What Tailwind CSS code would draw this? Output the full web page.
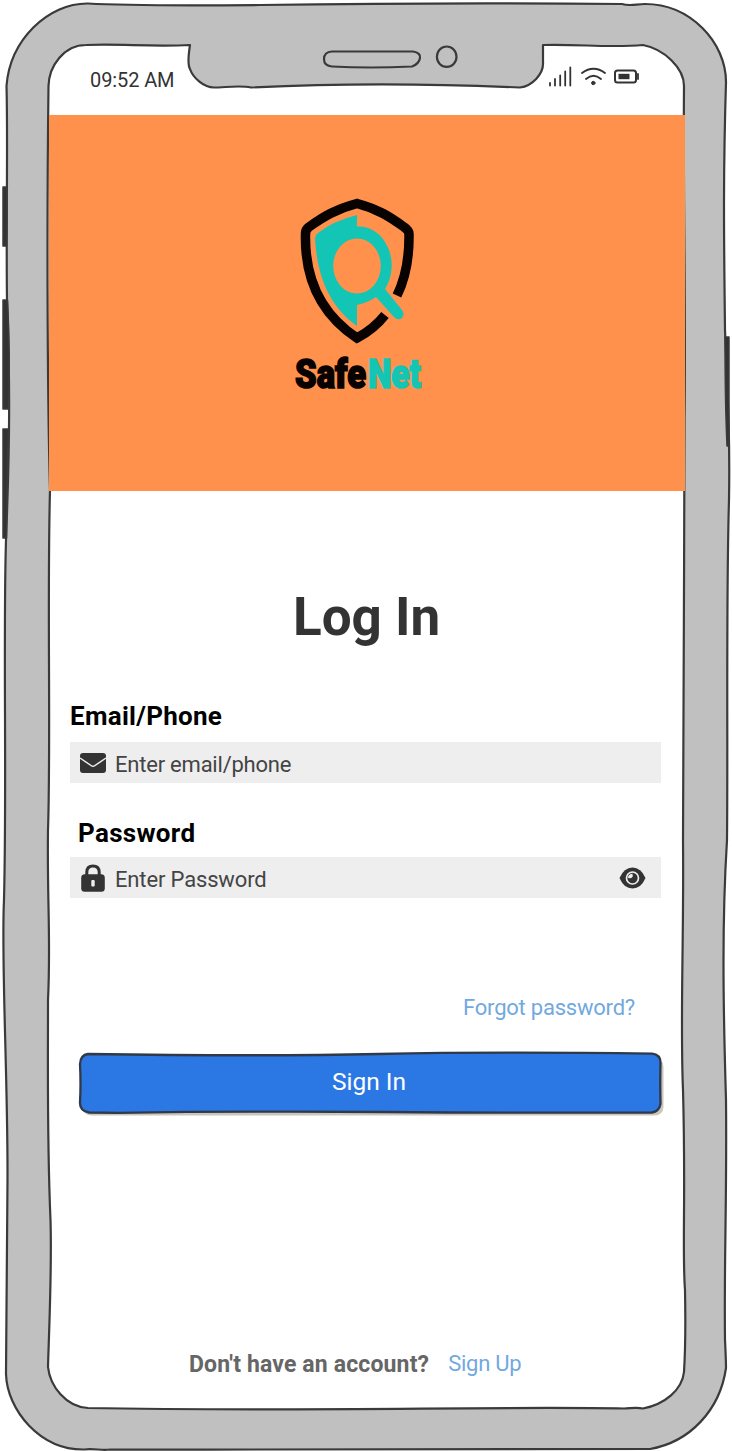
<!DOCTYPE html>
<html lang="en">
<head>
<meta charset="utf-8">
<title>SafeNet Log In</title>
<script src="https://cdn.jsdelivr.net/npm/@tailwindcss/browser@4"></script>
</head>
<body class="bg-white font-['Roboto',sans-serif] text-[#333]">
<div class="relative h-[1451px] w-[732px] overflow-hidden">
  <!-- phone frame -->
  <svg class="absolute inset-0" width="732" height="1451" viewBox="0 0 732 1451" fill="none" stroke="#3a3a3a" stroke-width="2.2" stroke-linejoin="round" stroke-linecap="round">
    <path fill="#c0c0c0" d="M6.500 86C10 40 48 3 88 3.500C130 6 200 5.500 260 5C400 3 520 3 622 4C630 6.500 636 4 645 4C690 4 726 42 726 82C723 180 724 240 725 330C728 400 730 440 729 500C726 600 728 740 727 840C722 920 723 1000 726 1100C727 1200 724 1260 725 1340Q726 1360 726 1368C720 1410 690 1442 650 1449C500 1448 300 1450 110 1449.500C102 1451 94 1448 84 1449.500C40 1450 7 1410 6 1374C6 1300 7 1240 7.500 1180C8 1080 1 960 4 900C7 780 3 640 6 540C10 440 10 380 7 300C6 220 8 140 6.500 86Z"/>
    <g fill="#333" stroke-width="1.500">
      <path d="M3 187H6.500Q7.500 220 6.500 246H3Z"/>
      <path d="M3 300H7.500Q10.500 360 8.500 409H3Z"/>
      <path d="M3 429H8.500Q6.500 490 6.500 538H3Z"/>
      <path d="M725 337H729V446H727Q725 400 725 337Z"/>
    </g>
    <path fill="#fff" d="M48.500 86C49 66 64 45 86 45C120 43.500 150 47 190 45Q187 64 190 69C193 78 204 87.500 214 87.500C225 87.500 240 85 251 87.500C340 83 420 83 520 87.500C532 86 544 74 543 62V45C580 44 610 48 643 45C664 49 684 68 684 86C683 200 686 300 684.500 420C684 560 684 700 683 840C684 940 680 1020 683 1090C686 1200 682 1250 685 1290Q686 1340 684 1372C682 1390 665 1404 643 1408.500C636 1407 630 1408.500 624 1408.500C500 1406 300 1412 88 1408C66 1407 50 1386 48 1367C49 1330 52 1270 50.500 1220C47 1140 48 1080 48 1000C51 940 47 900 48 830C51 740 47 600 50 490C47 380 47 200 48.500 86Z"/>
    <path d="M332 51.500H413Q421 53 420 58Q419 64 412 66.500Q370 68.500 332 66.500Q324 66 324 59Q324 52 332 51.500Z"/>
    <ellipse cx="446.700" cy="56.700" rx="9.800" ry="10.200"/>
  </svg>

  <main class="relative flex h-full flex-col">
    <div class="flex h-[115px] shrink-0 items-start justify-between pt-[65px] pr-[92px] pl-[90px]">
      <span class="mt-[2px] text-[20px] leading-[26px] tracking-[-0.1px]">09:52 AM</span>
      <svg width="92" height="22" viewBox="548 65 92 22" fill="none" stroke="#333" stroke-width="1.800" stroke-linecap="round">
        <path d="M550 83V85.500M555 79V85.500M560.200 75.500V85.500M565.200 71.500V85.500M570.300 67.500V85.500"/>
        <path d="M582 73Q593.500 64.500 605 73M586 79Q593.500 72.500 601 79"/>
        <circle cx="593.300" cy="83" r="1.700" fill="#333" stroke-width="1"/>
        <rect x="615" y="70.500" width="21" height="12" rx="2.500" stroke-width="2"/>
        <path d="M638 74V79"/>
        <path d="M618.500 73.800H629.500V79.200H618.500Z" fill="#333" stroke="none"/>
      </svg>
    </div>

    <header class="mr-[47px] ml-[49px] flex h-[376px] shrink-0 bg-[#ff914d] pt-[80px] pl-[238px]">
      <svg width="160" height="205" viewBox="287 195 160 205">
        <path fill="none" stroke="#080200" stroke-width="9.500" d="M397 295.500Q409.500 270 409 234C409 231 407 229 404 227C390 217 378 209 357 203.500C336 209 323 217 309 227C306 229 305.500 231 305.500 234Q304 303 357 338Q374 329 385 315"/>
        <path fill="#13c5b5" fill-rule="evenodd" d="M357 215V226.500A33 39 0 0 1 385 289L402 310Q405 314 402 318Q398 321 394 317L376 297Q367 303 357 305V326C330 307 317 277 315 238Q315 235 318 233Q333 221 357 215ZM357 238.500A23.800 27.500 0 1 0 357 293.500A23.800 27.500 0 1 0 357 238.500Z"/>
        <g font-family="Roboto, sans-serif" font-size="40" font-weight="900" stroke-width="1.600">
          <text transform="translate(295 388) scale(.845 1)" textLength="84" lengthAdjust="spacingAndGlyphs" fill="#080200" stroke="#080200">Safe</text>
          <text transform="translate(368 388) scale(.8 1)" textLength="66" lengthAdjust="spacingAndGlyphs" fill="#13c5b5" stroke="#13c5b5">Net</text>
        </g>
      </svg>
    </header>

    <h1 class="mt-[96px] self-start pl-[293px] text-[53px] leading-[60px] font-bold">Log In</h1>

    <form class="flex flex-col pr-[71px] pl-[70px]">
      <label class="mt-[53px] text-[26px] leading-[32px] font-bold tracking-[0.28px] text-black">Email/Phone</label>
      <div class="mt-[10px] flex h-[41px] items-center bg-[#eee] pl-[9px]">
        <svg width="28" height="22" viewBox="0 0 28 22"><rect x="1" y="1" width="26" height="20" rx="3" fill="#333"/><path d="M1 6L12 13.500Q14 15 16 13.500L27 6" fill="none" stroke="#eee" stroke-width="1.500"/></svg>
        <span class="mt-[5px] ml-[8px] text-[22px] leading-[28px] tracking-[-0.22px] text-[#444]">Enter email/phone</span>
      </div>
      <label class="mt-[34px] pl-[8px] text-[26px] leading-[32px] font-bold tracking-[0.3px] text-black">Password</label>
      <div class="mt-[8px] flex h-[41px] items-center bg-[#eee] pr-[15px] pl-[11px]">
        <svg width="24" height="28" viewBox="0 0 24 28"><path d="M5.800 12V8Q6 2 12 2T18.200 8V12" fill="none" stroke="#333" stroke-width="3"/><rect x="0.200" y="10.200" width="23.600" height="17.600" rx="3.500" fill="#333"/><rect x="10.300" y="16" width="3.400" height="6.500" rx="1" fill="#eee"/></svg>
        <span class="mt-[5px] ml-[10px] text-[22px] leading-[28px] tracking-[-0.15px] text-[#444]">Enter Password</span>
        <svg class="ml-auto" width="27" height="22" viewBox="0 0 27 22"><path d="M0.500 11Q5 .5 13.500 .5T26.500 11Q22 21.500 13.500 21.500T.5 11Z" fill="#333"/><circle cx="13.500" cy="11" r="6" fill="none" stroke="#eee" stroke-width="1.700"/><path d="M13.300 6.500Q14.500 9 13 10.500T9 10.800Q9 7.500 13.300 6.500Z" fill="#eee"/></svg>
      </div>
      <a class="mt-[96px] mr-[26px] self-end text-[22px] leading-[28px] tracking-[-0.22px] text-[#71a9df]">Forgot password?</a>
      <button type="button" class="relative mt-[31px] ml-[9px] h-[61px] pr-[2px] pb-[2px] text-center text-[24.500px] text-white">
        <svg class="absolute inset-0 overflow-visible" width="582" height="61" viewBox="0 0 582 61" stroke-linejoin="round">
          <path d="M12 5H574Q584.500 5 584.500 14V54Q584 62.500 575 62.500H12Q4 62 4 54Z" fill="#c9c5bf"/>
          <path d="M9 1Q180 3.500 300 1T573 .7Q581.500 1.500 581.500 10Q581 30 581.500 51Q580 58.500 573 59.500Q440 60 306 59T39 59.800L10 59.500Q1 58 1 50Q2 30 1 11Q1.500 2 9 1Z" fill="#2b78e4" stroke="#2f3947" stroke-width="2.300"/>
        </svg>
        <span class="relative">Sign In</span>
      </button>
    </form>

    <p class="mt-[237px] flex pl-[189px] text-[22px] leading-[28px]"><span class="text-[23px] font-bold tracking-[0.15px] text-[#666]">Don't have an account?</span><a class="ml-[19px] -mt-px tracking-[-0.25px] text-[#71a9df]">Sign Up</a></p>
  </main>
</div>
</body>
</html>
